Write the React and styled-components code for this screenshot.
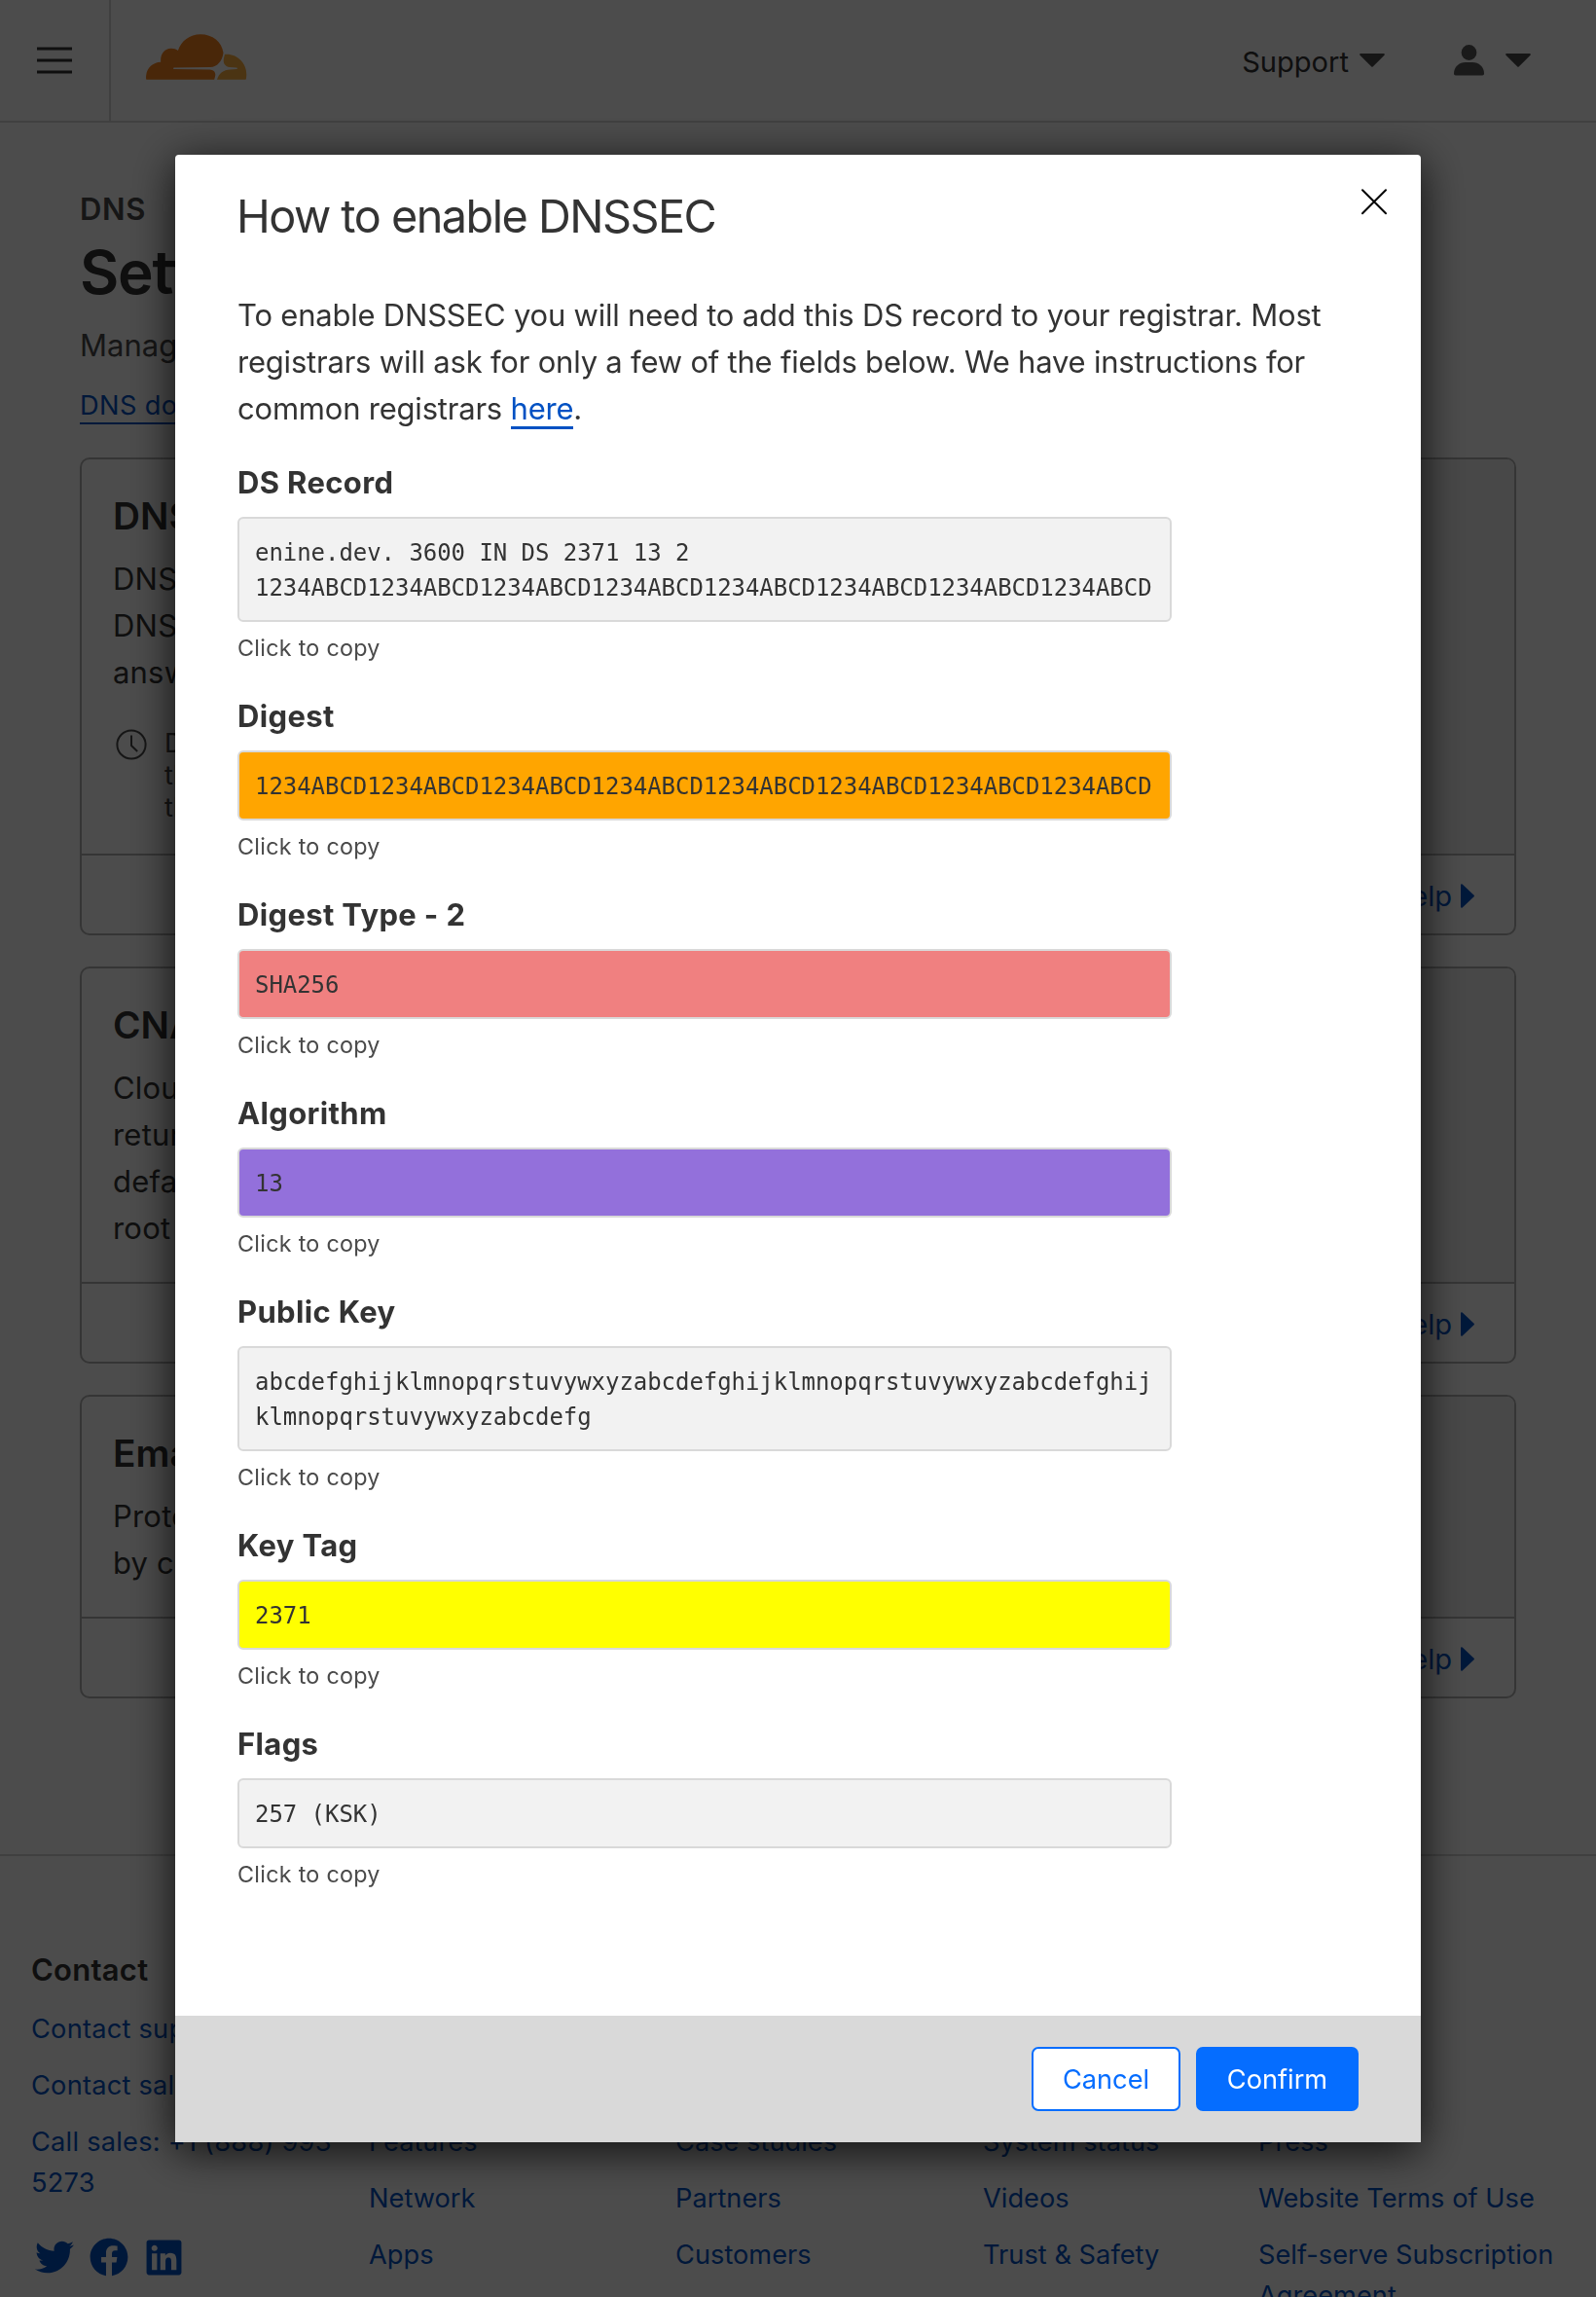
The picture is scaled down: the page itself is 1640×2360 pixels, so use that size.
import React from "react";
import styled, { createGlobalStyle } from "styled-components";
import { FaTwitter, FaFacebook, FaLinkedin } from "react-icons/fa";

const GlobalStyle = createGlobalStyle`
  *, *::before, *::after { box-sizing: border-box; }
  body {
    margin: 0;
    background: #fff;
    color: #333;
    font-family: Inter, "Liberation Sans", sans-serif;
    -webkit-font-smoothing: antialiased;
  }
  h1, h2, h3, p, ul { margin: 0; padding: 0; }
  a { color: #0051c3; text-decoration: none; }
  svg { display: block; flex: none; }
`;

/* ---------- page shell ---------- */

const Page = styled.div`
  height: 2360px;
  overflow: hidden;
`;

const TopBar = styled.header`
  display: flex;
  align-items: center;
  height: 126px;
  padding-right: 67px;
  border-bottom: 2px solid #d5d5d5;
`;

const MenuButton = styled.div`
  display: flex;
  align-items: center;
  justify-content: center;
  width: 114px;
  height: 124px;
  border-right: 2px solid #d5d5d5;
`;

const LogoLink = styled.div`
  margin: -7px auto 0 36px;
`;

const NavItem = styled.div`
  display: flex;
  align-items: center;
  gap: ${(p) => p.$gap}px;
  margin-left: ${(p) => p.$offset || 0}px;
  font-size: 29.1px;
  line-height: 40px;
  color: #333;
`;

const NavLabel = styled.span`
  padding-top: 3px;
`;

const Content = styled.main`
  display: flex;
  flex-direction: column;
  align-items: flex-start;
  padding: 69px 82px 160px;
`;

const Eyebrow = styled.p`
  font-size: 31px;
  font-weight: 600;
  line-height: 40px;
  letter-spacing: 0.7px;
  color: #4a4a4a;
`;

const PageTitle = styled.h1`
  margin-top: 7px;
  font-size: 62px;
  font-weight: 600;
  line-height: 75px;
  letter-spacing: -1.2px;
`;

const PageSummary = styled.p`
  margin-top: 14px;
  font-size: 31px;
  line-height: 48px;
  color: #4a4a4a;
`;

const DocsLine = styled.p`
  margin: 17px 0 32px;
  font-size: 27.2px;
  line-height: 42px;
  letter-spacing: 0.4px;
`;

const DocsLink = styled.a`
  padding-bottom: 1px;
  border-bottom: 2px solid #0051c3;
`;

const CardList = styled.div`
  display: flex;
  flex-direction: column;
  gap: 32px;
  width: 100%;
`;

const Card = styled.section`
  border: 2px solid #b3b3b3;
  border-radius: 10px;
  overflow: hidden;
`;

const CardBody = styled.div`
  display: flex;
  border-bottom: 2px solid #b3b3b3;
`;

const CardMain = styled.div`
  flex: 1;
  padding: 33px 32px 31px;
`;

const CardAside = styled.div`
  width: 440px;
  background: #f2f2f2;
`;

const CardTitle = styled.h2`
  margin-bottom: 16px;
  font-size: 38.8px;
  font-weight: 600;
  line-height: 50px;
`;

const CardText = styled.p`
  font-size: 31px;
  line-height: 48px;
  letter-spacing: 0.2px;
  white-space: pre-line;
`;

const Notice = styled.div`
  display: flex;
  gap: 18px;
  margin-top: 32px;
  padding-left: 3px;
  font-size: 27.2px;
  line-height: 33px;
  color: #4a4a4a;
  white-space: pre-line;
`;

const CardFooter = styled.div`
  display: flex;
  align-items: center;
  justify-content: flex-end;
  gap: 9px;
  height: 80px;
  padding: 2px 41px 0 0;
  font-size: 29.1px;
  color: #0051c3;
`;

/* ---------- site footer ---------- */

const SiteFooter = styled.footer`
  display: grid;
  grid-template-columns: 347px 315px 316px 283px 1fr;
  padding: 96px 31px 0 32px;
  border-top: 2px solid #d5d5d5;
`;

const FooterColumn = styled.div`
  display: flex;
  flex-direction: column;
`;

const FooterHeading = styled.h3`
  margin-bottom: 19px;
  font-size: 31px;
  font-weight: 600;
  line-height: 42px;
  letter-spacing: 0.25px;
`;

const FooterLinks = styled.ul`
  display: flex;
  flex-direction: column;
  gap: 16px;
  list-style: none;
  font-size: 27.2px;
  line-height: 42px;
  letter-spacing: ${(p) => (p.$wide ? 0.24 : 0.03)}px;
  white-space: pre-line;
`;

const Social = styled.div`
  display: flex;
  align-items: center;
  gap: 16px;
  height: 40px;
  margin-top: 35px;
  padding-left: 4px;
  color: #0051c3;
`;

/* ---------- modal ---------- */

const Overlay = styled.div`
  position: fixed;
  inset: 0;
  display: flex;
  justify-content: center;
  align-items: flex-start;
  padding-top: 159px;
  background: rgba(0, 0, 0, 0.7);
`;

const Modal = styled.div`
  display: flex;
  flex-direction: column;
  width: 1280px;
  height: 2042px;
  background: #fff;
  border-radius: 4px 4px 0 0;
  box-shadow: 0 8px 46px rgba(0, 0, 0, 0.82);
`;

const ModalHeader = styled.div`
  display: flex;
  justify-content: space-between;
  align-items: flex-start;
  padding: 32px 34px 0 63px;
`;

const ModalTitle = styled.h2`
  font-size: 46.8px;
  font-weight: 400;
  line-height: 62px;
  letter-spacing: -1.52px;
`;

const ModalBody = styled.div`
  flex: 1;
  display: flex;
  flex-direction: column;
  gap: 32px;
  padding: 47px 64px 0;
`;

const Intro = styled.p`
  font-size: 31px;
  line-height: 48px;
  letter-spacing: -0.21px;
  white-space: nowrap;
`;

const InlineLink = styled.a`
  border-bottom: 3px solid #0051c3;
`;

const Field = styled.div`
  width: 960px;
`;

const FieldLabel = styled.h3`
  margin-bottom: 16px;
  font-size: 31px;
  font-weight: 700;
  line-height: 39px;
  letter-spacing: 0.35px;
`;

const FieldValue = styled.div`
  padding: 17px 16px 15px;
  border: 2px solid #d9d9d9;
  border-radius: 6px;
  background: ${(p) => p.$fill || "#f2f2f2"};
  font-family: "DejaVu Sans Mono", monospace;
  font-size: 24px;
  line-height: 36px;
  letter-spacing: -0.05px;
  white-space: pre;
`;

const FieldHint = styled.p`
  margin-top: 8px;
  font-size: 23.3px;
  line-height: 37px;
  letter-spacing: 0.28px;
  color: #4a4a4a;
`;

const ModalFooter = styled.div`
  display: flex;
  justify-content: flex-end;
  align-items: center;
  gap: 16px;
  height: 130px;
  padding: 0 64px;
  background: #d9d9d9;
`;

const Button = styled.button`
  width: ${(p) => (p.$primary ? 167 : 153)}px;
  height: 66px;
  padding: 2px 0 0;
  border: 2px solid #056dff;
  border-radius: 7px;
  background: ${(p) => (p.$primary ? "#056dff" : "#fff")};
  color: ${(p) => (p.$primary ? "#fff" : "#056dff")};
  font-family: inherit;
  font-size: 27.2px;
  line-height: 40px;
`;

/* ---------- icons ---------- */

const MenuIcon = () => (
  <svg width="36" height="28" viewBox="0 0 36 28" stroke="#333" strokeWidth="3.2">
    <path d="M0 2h36M0 14h36M0 26h36" />
  </svg>
);

const CloudLogo = () => (
  <svg width="104" height="47" viewBox="150 35.3 104 47">
    <path
      fill="#f6821f"
      d="M150.5 82C149.9 81.6 150 79 150.2 77.5C151 70 157 64.3 165.2 64C164.4 56 169 50.2 175.6 50C178.500 49.900 181 50.700 182.900 52.300C186 42.500 195 35.600 206 35.600C218.500 35.600 228 43.500 229.500 54.500C228.500 62.500 223.500 69.200 216 69.300L179 69.700C177.600 69.800 177.600 71.200 179 71.300L215.500 71.700C220 71.900 222.200 75 221 79L220.200 82Z"
    />
    <path
      fill="#fbad41"
      d="M231 56.100C243 55 253.300 64.500 253.300 76.500C253.300 79 253 81.200 252.500 82H223C225 75.500 229.500 71.900 236.500 71.700L243 71.300C244.300 71.200 244.300 70.100 243 69.900L236 69.300C231 68.500 228.900 65 230 60Z"
    />
  </svg>
);

const CaretDown = () => (
  <svg width="26" height="14" viewBox="0 0 26 14" fill="#4a4a4a" stroke="#4a4a4a" strokeWidth="2" strokeLinejoin="round">
    <path d="M1.200 1h23.600L13 12.800Z" />
  </svg>
);

const CaretRight = () => (
  <svg width="14" height="25" viewBox="0 0 14 25" fill="#0051c3" stroke="#0051c3" strokeWidth="2" strokeLinejoin="round">
    <path d="M1 1.200v22.600L12.900 12.500Z" />
  </svg>
);

const UserIcon = () => (
  <svg width="31" height="32" viewBox="0 0 31 32" fill="#595959">
    <circle cx="15.500" cy="8" r="7.900" />
    <path d="M0 29.500C0 22.500 5.500 18 12 18h7c6.500 0 12 4.500 12 11.500 0 1.300-.6 1.900-1.800 1.900H1.800C.6 31.400 0 30.800 0 29.500Z" />
  </svg>
);

const ClockIcon = () => (
  <svg width="32" height="34" viewBox="0 -2 32 34" fill="none" stroke="#4a4a4a" strokeWidth="2">
    <circle cx="16" cy="16" r="14.600" />
    <path d="M16 6.500v10.500l6.200 6" />
  </svg>
);

const CloseIcon = () => (
  <svg width="28" height="30" viewBox="0 -2 28 30" stroke="#000" strokeWidth="2" strokeLinecap="round">
    <path d="M2 2.200l24 24M26 2.200l-24 24" />
  </svg>
);

/* ---------- data ---------- */

const DIGEST = "1234ABCD".repeat(8);

const fields = [
  { label: "DS Record", value: `enine.dev. 3600 IN DS 2371 13 2\n${DIGEST}` },
  { label: "Digest", value: DIGEST, fill: "#ffa500" },
  { label: "Digest Type - 2", value: "SHA256", fill: "#f08080" },
  { label: "Algorithm", value: "13", fill: "#9370db" },
  {
    label: "Public Key",
    value: "abcdefghijklmnopqrstuvywxyzabcdefghijklmnopqrstuvywxyzabcdefghij\nklmnopqrstuvywxyzabcdefg",
  },
  { label: "Key Tag", value: "2371", fill: "#ffff00" },
  { label: "Flags", value: "257 (KSK)" },
];

const cards = [
  {
    title: "DNSSEC",
    text: "DNSSEC protects against forged DNS answers.\nDNSSEC protected zones are signed to ensure the\nanswers received are authentic.",
    notice: "DNSSEC is pending while we wait for\nthe DS record to be added to\nthe registrar.",
  },
  {
    title: "CNAME Flattening",
    text: "Cloudflare will follow a CNAME to where it points and\nreturn that IP address instead of the record. By\ndefault, Cloudflare will only flatten the CNAME at the\nroot of your domain.",
  },
  {
    title: "Email Security",
    text: "Protect your domain from spoofing and phishing\nby creating the required DNS records.",
  },
];

const footerColumns = [
  { heading: "What we do", links: ["Plans", "Overview", "Features", "Network", "Apps"] },
  { heading: "Resources", links: ["Help center", "Community", "Case studies", "Partners", "Customers"] },
  { heading: "Support", links: ["Help center", "Community", "System status", "Videos", "Trust & Safety"] },
  {
    heading: "About us",
    links: ["Our team", "Careers", "Press", "Website Terms of Use", "Self-serve Subscription\nAgreement"],
  },
];

const LinkItems = ({ links, wide }) => (
  <FooterLinks $wide={wide}>
    {links.map((text) => (
      <li key={text}>
        <a>{text}</a>
      </li>
    ))}
  </FooterLinks>
);

export default function App() {
  return (
    <>
      <GlobalStyle />
      <Page>
        <TopBar>
          <MenuButton>
            <MenuIcon />
          </MenuButton>
          <LogoLink>
            <CloudLogo />
          </LogoLink>
          <NavItem $gap={11}>
            <NavLabel>Support</NavLabel>
            <CaretDown />
          </NavItem>
          <NavItem $gap={22} $offset={71}>
            <UserIcon />
            <CaretDown />
          </NavItem>
        </TopBar>

        <Content>
          <Eyebrow>DNS</Eyebrow>
          <PageTitle>Settings</PageTitle>
          <PageSummary>Manage your Domain Name System (DNS) settings.</PageSummary>
          <DocsLine>
            <DocsLink>DNS documentation</DocsLink>
          </DocsLine>
          <CardList>
            {cards.map((card) => (
              <Card key={card.title}>
                <CardBody>
                  <CardMain>
                    <CardTitle>{card.title}</CardTitle>
                    <CardText>{card.text}</CardText>
                    {card.notice && (
                      <Notice>
                        <ClockIcon />
                        <span>{card.notice}</span>
                      </Notice>
                    )}
                  </CardMain>
                  <CardAside />
                </CardBody>
                <CardFooter>
                  Help
                  <CaretRight />
                </CardFooter>
              </Card>
            ))}
          </CardList>
        </Content>

        <SiteFooter>
          <FooterColumn>
            <FooterHeading>Contact</FooterHeading>
            <LinkItems wide links={["Contact support", "Contact sales", "Call sales: +1 (888) 993\n5273"]} />
            <Social>
              <FaTwitter size={40} />
              <FaFacebook size={40} />
              <FaLinkedin size={41} />
            </Social>
          </FooterColumn>
          {footerColumns.map((column) => (
            <FooterColumn key={column.heading}>
              <FooterHeading>{column.heading}</FooterHeading>
              <LinkItems links={column.links} />
            </FooterColumn>
          ))}
        </SiteFooter>
      </Page>

      <Overlay>
        <Modal>
          <ModalHeader>
            <ModalTitle>How to enable DNSSEC</ModalTitle>
            <CloseIcon />
          </ModalHeader>
          <ModalBody>
            <Intro>
              To enable DNSSEC you will need to add this DS record to your registrar. Most
              <br />
              registrars will ask for only a few of the fields below. We have instructions for
              <br />
              common registrars <InlineLink>here</InlineLink>.
            </Intro>
            {fields.map((field) => (
              <Field key={field.label}>
                <FieldLabel>{field.label}</FieldLabel>
                <FieldValue $fill={field.fill}>{field.value}</FieldValue>
                <FieldHint>Click to copy</FieldHint>
              </Field>
            ))}
          </ModalBody>
          <ModalFooter>
            <Button>Cancel</Button>
            <Button $primary>Confirm</Button>
          </ModalFooter>
        </Modal>
      </Overlay>
    </>
  );
}
